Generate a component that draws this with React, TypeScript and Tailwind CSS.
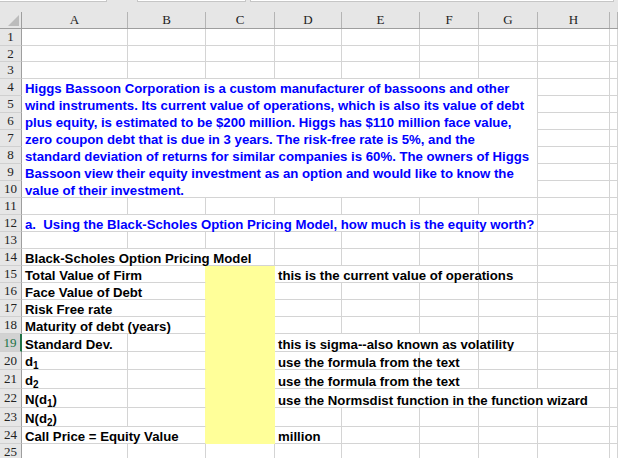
import React from "react";
import clsx from "clsx";

type Cell = {
  span?: number;
  rows?: number;
  text?: React.ReactNode;
  lines?: string[];
  blue?: boolean;
  fill?: boolean;
};

const COLS = ["A", "B", "C", "D", "E", "F", "G", "H", ""];

const spanClass: Record<number, string> = {
  1: "",
  2: "col-span-2",
  3: "col-span-3",
  5: "col-span-5",
  7: "col-span-7",
};

const empty = (n: number): Cell[] => Array.from({ length: n }, () => ({}));

const sub = (base: string, n: string) => (
  <span>
    {base}
    <span className="relative top-[3px] text-[10px]">{n}</span>
  </span>
);

const intro = [
  "Higgs Bassoon Corporation is a custom manufacturer of bassoons and other",
  "wind instruments. Its current value of operations, which is also its value of debt",
  "plus equity, is estimated to be $200 million. Higgs has $110 million face value,",
  "zero coupon debt that is due in 3 years. The risk-free rate is 5%, and the",
  "standard deviation of returns for similar companies is 60%. The owners of Higgs",
  "Bassoon view their equity investment as an option and would like to know the",
  "value of their investment.",
];

// one entry per sheet row, cells left to right (A..I)
const sheet: Cell[][] = [
  empty(9),
  empty(9),
  empty(9),
  [{ span: 7, rows: 7, lines: intro, blue: true }, {}, {}],
  empty(2),
  empty(2),
  empty(2),
  empty(2),
  empty(2),
  empty(2),
  empty(9),
  [
    {
      span: 7,
      blue: true,
      text: "a.  Using the Black-Scholes Option Pricing Model, how much is the equity worth?",
    },
    {},
    {},
  ],
  empty(9),
  [{ span: 3, text: "Black-Scholes Option Pricing Model" }, ...empty(6)],
  [
    { span: 2, text: "Total Value of Firm" },
    { fill: true },
    { span: 3, text: "this is the current value of operations" },
    ...empty(3),
  ],
  [{ span: 2, text: "Face Value of Debt" }, { fill: true }, ...empty(6)],
  [{ span: 2, text: "Risk Free rate" }, { fill: true }, ...empty(6)],
  [{ span: 2, text: "Maturity of debt (years)" }, { fill: true }, ...empty(6)],
  [
    { text: "Standard Dev." },
    {},
    { fill: true },
    { span: 3, text: "this is sigma--also known as volatility" },
    ...empty(3),
  ],
  [
    { text: sub("d", "1") },
    {},
    { fill: true },
    { span: 2, text: "use the formula from the text" },
    ...empty(4),
  ],
  [
    { text: sub("d", "2") },
    {},
    { fill: true },
    { span: 2, text: "use the formula from the text" },
    ...empty(4),
  ],
  [
    { text: <span>N({sub("d", "1")})</span> },
    {},
    { fill: true },
    { span: 5, text: "use the Normsdist function in the function wizard" },
    {},
  ],
  [{ text: <span>N({sub("d", "2")})</span> }, {}, { fill: true }, ...empty(6)],
  [
    { span: 2, text: "Call Price = Equity Value" },
    { fill: true },
    { text: "million" },
    ...empty(5),
  ],
  empty(9),
];

const ACTIVE_ROW = 19;

export default function App() {
  return (
    <div className="w-[618px] h-[458px] overflow-hidden bg-white font-['Liberation_Sans',Arial,sans-serif]">
      {/* remains of the name box / formula bar */}
      <div className="h-[12px] bg-[#e6e6e6] flex items-start">
        <div className="w-[107px] h-[2px] bg-white border-b border-r border-[#c6c6c6]" />
        <div className="w-[30px]" />
        <div className="w-[109px] h-[2px] bg-white border-b border-x border-[#c6c6c6]" />
        <div className="w-[4px]" />
        <div className="w-[364px] h-[2px] bg-white border-b border-x border-[#c6c6c6]" />
      </div>

      <div className="grid grid-cols-[22px_106px_78px_69px_67px_78px_59px_59px_72px_8px] grid-rows-[17px_16.67px_16.67px_16.67px_17px_17px_17px_17px_17px_17px_17px_17px_17px_17px_17px_17px_17px_17px_17px_18px_18.5px_18.5px_19px_19px_17px_17px]">
        {/* column header row */}
        <div className="bg-[#e6e6e6] border-b border-r border-[#9e9e9e] flex items-end justify-end pr-[2px] pb-[2px]">
          <svg width="11" height="11" viewBox="0 0 11 11">
            <path d="M11 0 L11 11 L0 11 Z" fill="#bcbcbc" />
          </svg>
        </div>
        {COLS.map((c, i) => (
          <div
            key={i}
            className="bg-[#e6e6e6] border-b border-[#9e9e9e] flex items-center justify-center font-['Liberation_Serif','Times_New_Roman',serif] text-[13px] text-[#222]"
          >
            <div className="w-full h-full flex items-center justify-center border-r border-[#b4b4b4]">
              {c}
            </div>
          </div>
        ))}

        {sheet.map((row, r) => {
          const num = r + 1;
          const active = num === ACTIVE_ROW;
          return (
            <React.Fragment key={r}>
              <div
                className={clsx(
                  "border-b border-[#d0d0d0] flex items-center justify-center font-['Liberation_Serif','Times_New_Roman',serif] text-[13px]",
                  active
                    ? "bg-[#d2d2d2] text-[#217346] border-r-2 border-r-[#217346]"
                    : "bg-[#e6e6e6] text-[#222] border-r border-r-[#9e9e9e]"
                )}
              >
                {num}
              </div>
              {row.map((cell, i) => {
                const nextFill = row[i + 1]?.fill;
                return (
                  <div
                    key={i}
                    className={clsx(
                      "border-b border-r whitespace-pre pl-[3px] font-bold text-[13.2px] leading-[13px]",
                      spanClass[cell.span ?? 1],
                      cell.rows === 7 && "row-span-7",
                      cell.blue ? "text-[#0000ff]" : "text-black",
                      cell.fill
                        ? "bg-[#ffff99] border-[#ffff99]"
                        : "border-[#d4d4d4]",
                      nextFill && "border-r-[#ffff99]",
                      cell.lines ? "flex flex-col" : "flex items-end"
                    )}
                  >
                    {cell.lines
                      ? cell.lines.map((l, j) => (
                          <div key={j} className="h-[17px] flex items-end pb-[1px] shrink-0">
                            {l}
                          </div>
                        ))
                      : cell.text}
                  </div>
                );
              })}
            </React.Fragment>
          );
        })}
      </div>
    </div>
  );
}
